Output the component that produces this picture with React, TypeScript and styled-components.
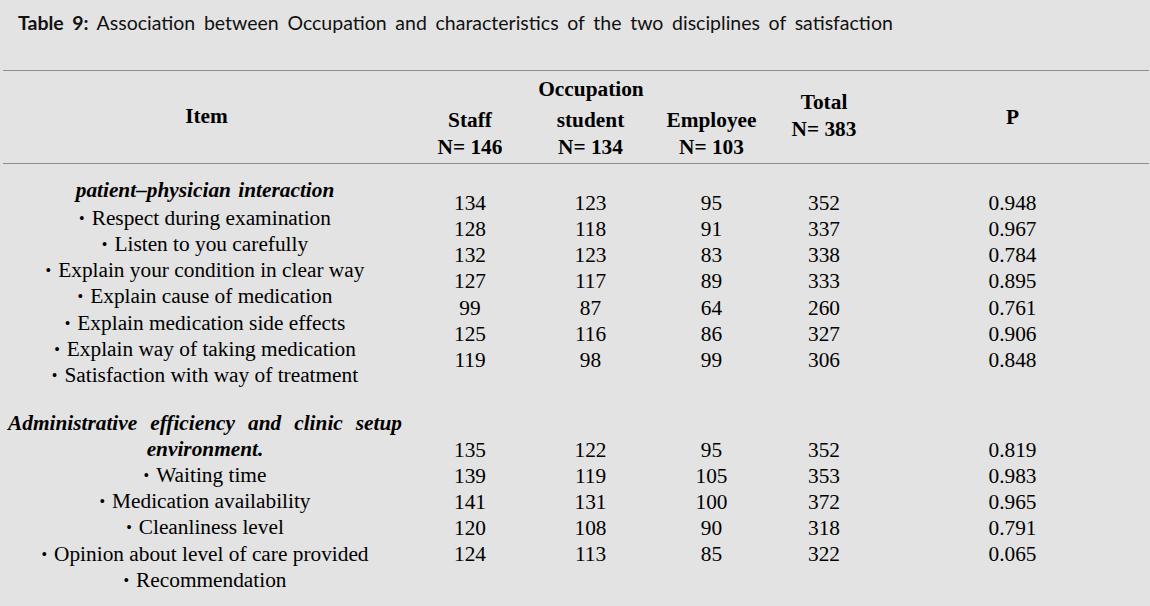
import React from "react";
import styled, { createGlobalStyle } from "styled-components";

const COLS = "407px 120px 121px 121px 104px 273px";

const GlobalStyle = createGlobalStyle`
  html, body {
    margin: 0;
    padding: 0;
    background: #e3e3e3;
  }
  body {
    width: 1150px;
    height: 606px;
    overflow: hidden;
  }
`;

const Page = styled.div`
  width: 1150px;
  height: 606px;
  background: #e3e3e3;
  color: #000;
`;

const Title = styled.div`
  font-family: "Lato", "Open Sans", sans-serif;
  font-size: 19.5px;
  line-height: 22px;
  word-spacing: 3.7px;
  padding: 11.5px 0 0 18px;
  height: 22.5px;
  white-space: nowrap;
  color: #111;
`;

const TitleLabel = styled.strong`
  font-weight: 700;
`;

const Table = styled.div`
  margin: 36px 0 0 3px;
  width: 1146px;
  border-top: 1px solid #8e8e8e;
  font-family: "Liberation Serif", "Times New Roman", serif;
  font-size: 21.33px;
`;

const HeaderGrid = styled.div`
  display: grid;
  grid-template-columns: ${COLS};
  grid-template-rows: 32px 60px;
  height: 92px;
  border-bottom: 1px solid #8e8e8e;
  font-weight: 700;
  line-height: 27px;
`;

const HeadCell = styled.div<{ $col: string; $row: string; $pt: number }>`
  grid-column: ${(p) => p.$col};
  grid-row: ${(p) => p.$row};
  padding-top: ${(p) => p.$pt}px;
  text-align: center;
  white-space: nowrap;
`;

const HeadLine = styled.div``;

const Section = styled.div<{ $pt: number }>`
  display: grid;
  grid-template-columns: ${COLS};
  padding-top: ${(p) => p.$pt}px;
  line-height: 26.2px;
`;

const ItemCell = styled.div`
  padding: 0 8px 0 5px;
  text-align: center;
`;

const SectionHeading = styled.div<{ $mb: number }>`
  font-weight: 700;
  font-style: italic;
  margin-bottom: ${(p) => p.$mb}px;
  text-align: justify;
  text-align-last: center;
  word-spacing: 2px;
`;

const Item = styled.div`
  white-space: nowrap;
  height: 26.2px;
`;

const Bullet = styled.span`
  font-size: 16px;
  line-height: 0;
  margin-right: 7px;
  vertical-align: 1px;
`;

const NumCell = styled.div<{ $pt: number }>`
  padding-top: ${(p) => p.$pt}px;
  text-align: center;
`;

const Num = styled.div``;

type SectionData = {
  heading: string;
  headingGap: number;
  items: string[];
  numOffset: number;
  top: number;
  values: string[][];
};

const sections: SectionData[] = [
  {
    heading: "patient–physician interaction",
    headingGap: 2,
    top: 12.7,
    numOffset: 13,
    items: [
      "Respect during examination",
      "Listen to you carefully",
      "Explain your condition in clear way",
      "Explain cause of medication",
      "Explain medication side effects",
      "Explain way of taking medication",
      "Satisfaction with way of treatment",
    ],
    values: [
      ["134", "128", "132", "127", "99", "125", "119"],
      ["123", "118", "123", "117", "87", "116", "98"],
      ["95", "91", "83", "89", "64", "86", "99"],
      ["352", "337", "338", "333", "260", "327", "306"],
      ["0.948", "0.967", "0.784", "0.895", "0.761", "0.906", "0.848"],
    ],
  },
  {
    heading: "Administrative  efficiency  and  clinic setup environment.",
    headingGap: 0,
    top: 21.4,
    numOffset: 27,
    items: [
      "Waiting time",
      "Medication availability",
      "Cleanliness level",
      "Opinion about level of care provided",
      "Recommendation",
    ],
    values: [
      ["135", "139", "141", "120", "124"],
      ["122", "119", "131", "108", "113"],
      ["95", "105", "100", "90", "85"],
      ["352", "353", "372", "318", "322"],
      ["0.819", "0.983", "0.965", "0.791", "0.065"],
    ],
  },
];

export default function App() {
  return (
    <Page>
      <GlobalStyle />
      <Title>
        <TitleLabel>Table 9:</TitleLabel> Association between Occupation and
        characteristics of the two disciplines of satisfaction
      </Title>
      <Table>
        <HeaderGrid>
          <HeadCell $col="1" $row="1 / 3" $pt={31.5}>
            Item
          </HeadCell>
          <HeadCell $col="2 / 5" $row="1" $pt={5.3}>
            Occupation
          </HeadCell>
          <HeadCell $col="2" $row="2" $pt={4.3}>
            <HeadLine>Staff</HeadLine>
            <HeadLine>N= 146</HeadLine>
          </HeadCell>
          <HeadCell $col="3" $row="2" $pt={4.3}>
            <HeadLine>student</HeadLine>
            <HeadLine>N= 134</HeadLine>
          </HeadCell>
          <HeadCell $col="4" $row="2" $pt={4.3}>
            <HeadLine>Employee</HeadLine>
            <HeadLine>N= 103</HeadLine>
          </HeadCell>
          <HeadCell $col="5" $row="1 / 3" $pt={18.3}>
            <HeadLine>Total</HeadLine>
            <HeadLine>N= 383</HeadLine>
          </HeadCell>
          <HeadCell $col="6" $row="1 / 3" $pt={33.3}>
            P
          </HeadCell>
        </HeaderGrid>
        {sections.map((s) => (
          <Section key={s.heading} $pt={s.top}>
            <ItemCell>
              <SectionHeading $mb={s.headingGap}>{s.heading}</SectionHeading>
              {s.items.map((it) => (
                <Item key={it}>
                  <Bullet>•</Bullet>
                  {it}
                </Item>
              ))}
            </ItemCell>
            {s.values.map((col, ci) => (
              <NumCell key={ci} $pt={s.numOffset}>
                {col.map((v, vi) => (
                  <Num key={vi}>{v}</Num>
                ))}
              </NumCell>
            ))}
          </Section>
        ))}
      </Table>
    </Page>
  );
}
